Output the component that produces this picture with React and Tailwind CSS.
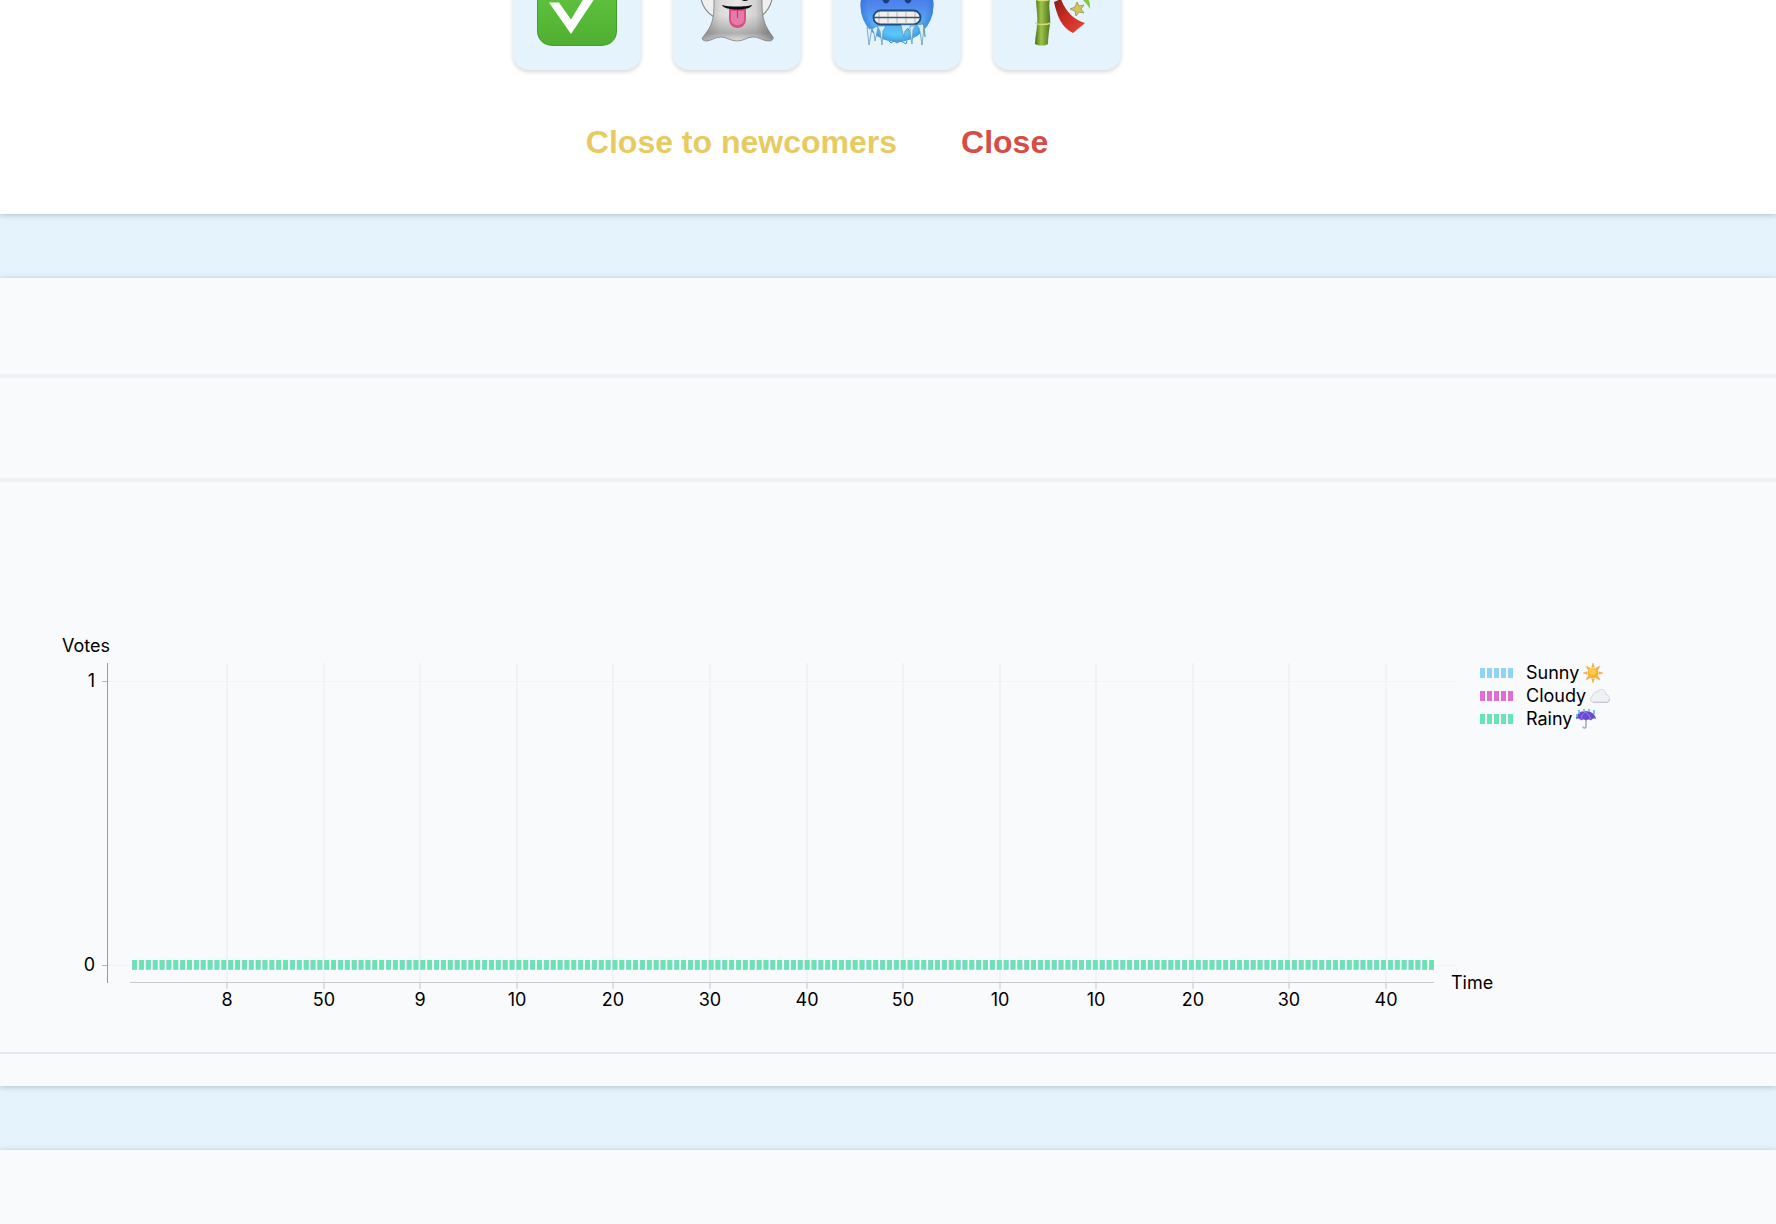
const SANS = '"Liberation Sans", Arial, sans-serif';

const xTicks = ["8", "50", "9", "10", "20", "30", "40", "50", "10", "10", "20", "30", "40"];

function CheckEmoji() {
  return (
    <svg viewBox="0 0 80 80" className="size-20" role="img" aria-label="Check mark">
      <defs>
        <linearGradient id="ck" x1="0" y1="0" x2="0" y2="1">
          <stop offset="0" stopColor="#6acb45" />
          <stop offset="0.6" stopColor="#58bb39" />
          <stop offset="1" stopColor="#50ae31" />
        </linearGradient>
      </defs>
      <rect width="80" height="80" rx="15" fill="#479c2e" />
      <rect x="1" y="0" width="78" height="79" rx="14" fill="url(#ck)" />
      <path d="M12 36.500h10l12 17L56 17h12L34 68z" fill="#fff" />
    </svg>
  );
}

function GhostEmoji() {
  return (
    <svg viewBox="0 0 80 80" className="size-20" role="img" aria-label="Ghost">
      <defs>
        <linearGradient id="gh" x1="0" y1="0" x2="1" y2="0">
          <stop offset="0" stopColor="#a2a2a2" />
          <stop offset="0.25" stopColor="#dadada" />
          <stop offset="0.5" stopColor="#e9e9e9" />
          <stop offset="0.75" stopColor="#d2d2d2" />
          <stop offset="1" stopColor="#828282" />
        </linearGradient>
        <linearGradient id="gs" x1="0" y1="0" x2="0" y2="1">
          <stop offset="0.6" stopColor="#777" stopOpacity="0" />
          <stop offset="0.88" stopColor="#6b6b6b" stopOpacity="0.45" />
          <stop offset="1" stopColor="#bbb" stopOpacity="0.3" />
        </linearGradient>
      </defs>
      <path d="M3 24c0 11 4 21 14 27l6-14h34l6 14c9-6 13-16 13-27z" fill="#efeff0" stroke="#8c8c8e" strokeWidth="1.200" />
      <path d="M15 10h50v26c0 18 3 24 11 35 1 3-2 4-5 4-7-1-9-4-15-4-6 0-9 4-16 4s-10-4-16-4-8 3-14 4c-4 0-6-2-4-4 9-11 11-17 11-35 0-3-2-6-2-26z" fill="url(#gh)" />
      <path d="M15 10h50v26c0 18 3 24 11 35 1 3-2 4-5 4-7-1-9-4-15-4-6 0-9 4-16 4s-10-4-16-4-8 3-14 4c-4 0-6-2-4-4 9-11 11-17 11-35 0-3-2-6-2-26z" fill="url(#gs)" stroke="#777" strokeWidth="0.700" />
      <ellipse cx="48" cy="31" rx="5" ry="4" fill="#111" />
      <path d="M32 42h17v11c0 12-17 12-17 0z" fill="#d94f83" />
      <path d="M34 45v8c0 8 13 8 13 0v-8z" fill="#e77aa9" />
      <path d="M40.500 43v9" stroke="#b83f70" strokeWidth="1.200" />
      <path d="M25 39c6 2 24 2 30 0-1 6-28 6-30 0z" fill="#0b0b0b" />
    </svg>
  );
}

function ColdEmoji() {
  return (
    <svg viewBox="0 0 80 80" className="size-20" role="img" aria-label="Cold face">
      <defs>
        <linearGradient id="cd" x1="0" y1="0" x2="0" y2="1">
          <stop offset="0" stopColor="#3c62e0" />
          <stop offset="0.5" stopColor="#4f86ee" />
          <stop offset="0.78" stopColor="#57b4f6" />
          <stop offset="1" stopColor="#5fd8f7" />
        </linearGradient>
        <radialGradient id="ce">
          <stop offset="0.8" stopColor="#2f72cf" stopOpacity="0" />
          <stop offset="1" stopColor="#2f72cf" stopOpacity="0.6" />
        </radialGradient>
      </defs>
      <circle cx="40" cy="39.500" r="36.500" fill="url(#cd)" />
      <circle cx="40" cy="39.500" r="36.500" fill="url(#ce)" />
      <ellipse cx="29" cy="31" rx="4" ry="6.500" fill="#173f7d" />
      <ellipse cx="51" cy="31" rx="4" ry="6.500" fill="#173f7d" />
      <rect x="16.500" y="44.500" width="47" height="14" rx="7" fill="#f0eeee" stroke="#1f4c80" strokeWidth="1.800" />
      <path d="M22 46v11M31 45.500v12M40 45.500v12M49 45.500v12M58 46v11" stroke="#b9b4b2" strokeWidth="1" />
      <path d="M17 51.500h46" stroke="#315679" strokeWidth="1.300" />
      <g fill="#d4effb" stroke="#568fba" strokeWidth="0.700">
        <path d="M10 61l3 2 2-1-1 6-2 11-1-9z" />
        <path d="M15 63l5-3 1 2-3 13-1-8z" />
        <path d="M20 60h9l-3 5-1 14-2-14z" />
        <path d="M44 59h15l-1 4-3-1-3 3-1-3-3 3-1 6-2-7z" />
        <path d="M53 60h5l-2 4-1 14-2-13z" />
        <path d="M60 59l6-1 1 3-2 18-2-13-1-4z" />
        <path d="M67 57l1 14-1-7z" />
      </g>
      <path d="M32 75l2 2 3-2 3 2 3-2 3 1 3 2 1-3" fill="none" stroke="#3c8fc4" />
    </svg>
  );
}

function TanabataEmoji() {
  return (
    <svg viewBox="0 0 80 80" className="size-20" role="img" aria-label="Tanabata tree">
      <defs>
        <linearGradient id="bm" x1="0" y1="0" x2="1" y2="0">
          <stop offset="0" stopColor="#4d6e1c" />
          <stop offset="0.4" stopColor="#9cc447" />
          <stop offset="1" stopColor="#527620" />
        </linearGradient>
        <linearGradient id="rb" x1="0" y1="0" x2="1" y2="1">
          <stop offset="0" stopColor="#861b16" />
          <stop offset="0.4" stopColor="#c42a22" />
          <stop offset="1" stopColor="#f04438" />
        </linearGradient>
      </defs>
      <path d="M19 10h13l1 23c-2 9 1 16 0 25-1 7-2 14-2 20-3 2-9 2-13 0 0-7 2-14 2-20 1-9-1-17-1-25z" fill="url(#bm)" />
      <path d="M18 57c3 2 12 2 16 0M18 33c4 2 11 2 16 0" stroke="#d5dc75" strokeWidth="1.500" fill="none" />
      <path d="M37 36l7-3c5 14 14 21 24 24L56 67C45 62 40 50 37 36z" fill="url(#rb)" />
      <path d="M60 36l2 4 5-1-3 4 3 4-5-1-3 4-1-5-5-2 5-2z" fill="#d1c35d" stroke="#98963f" strokeWidth="0.800" />
      <path d="M64 32l7 1c2 3 2 6 2 10-2-4-5-7-9-11z" fill="#81c63d" />
    </svg>
  );
}

function SunIcon() {
  return (
    <svg viewBox="0 0 20 20" className="size-5" role="img" aria-label="Sun">
      <path d="M10 0l1.300 4h-2.600zM10 20l1.300-4h-2.600zM0 10l4-1.300v2.600zM20 10l-4-1.300v2.600zM3 3l4 2-2 2zM17 3l-4 2 2 2zM3 17l4-2-2-2zM17 17l-4-2 2-2z" fill="#efa348" stroke="#f3b565" strokeWidth="0.600" />
      <circle cx="10" cy="10" r="5.500" fill="#f8b12e" />
      <circle cx="9.500" cy="8.500" r="3.500" fill="#fdcc4a" />
    </svg>
  );
}

function CloudIcon() {
  return (
    <svg viewBox="0 0 20 20" className="size-5" role="img" aria-label="Cloud">
      <path d="M4 16.500C-1 16-.5 10.500 3 10 2.500 6.500 5.500 5.500 7 6.500c2-5 9-3.500 9 2 5 .5 4.500 8 0 8z" fill="#eff1f5" stroke="#c9ced6" strokeWidth="0.800" />
      <path d="M3 16.200h13.500c2 0 3-1.500 3-3" fill="none" stroke="#bcc3ce" />
    </svg>
  );
}

function UmbrellaIcon() {
  return (
    <svg viewBox="0 0 20 20" className="size-5" role="img" aria-label="Umbrella with rain">
      <path d="M10 9v8.500c0 2-3 2-3 0" fill="none" stroke="#a5a8b3" strokeWidth="1.500" />
      <path d="M0 10c0-5 4-8 9.500-8S19.500 5 20 10c-2-1-3.500-.5-5 1.500-1.500-1.500-3.500-1.500-5 0-1.500-1.500-3.500-1.500-5 0-1.500-2-3-2.500-5-1.500z" fill="#6a4bd0" />
      <path d="M9.500 3c-3 2-4 4-4.500 7.500M9.500 3c3 2 4.500 4 5 7" fill="none" stroke="#9a83ec" />
      <path d="M3 1v4M8 0v3M13 0v3M18 1v4M1 5v3" stroke="#68bdea" strokeWidth="1.800" />
    </svg>
  );
}

const legend = [
  { label: "Sunny", color: "#8fd3f8", Icon: SunIcon },
  { label: "Cloudy", color: "#e36cd3", Icon: CloudIcon },
  { label: "Rainy", color: "#68e3b4", Icon: UmbrellaIcon },
];

const FIRST_TICK = 227;
const LAST_TICK = 1386;
const tickX = (i) => Math.round(FIRST_TICK + (i * (LAST_TICK - FIRST_TICK)) / (xTicks.length - 1));

const DASHES = 190;
const dashX = (i) => 132 + (i * 1297) / (DASHES - 1);

function VotesChart() {
  return (
    <svg width="1448" height="400" viewBox="50 630 1448 400" className="shrink-0" role="img" aria-label="Votes over time" fontFamily="Inter, sans-serif" fontSize="18">
      <g stroke="#f2f3f5">
        <path d="M108 681.500H1457M108 965.500H1457" />
        {xTicks.map((_, i) => (
          <path key={i} d={`M${tickX(i)} 663V983`} strokeWidth="2" />
        ))}
      </g>
      <path d="M107.500 663V983" stroke="#96999e" />
      <path d="M102 681.500h5M102 965.500h5" stroke="#b4b6ba" />
      <path d="M130 982.500H1434" stroke="#c8cbce" />
      {xTicks.map((_, i) => (
        <path key={i} d={`M${tickX(i)} 983v6`} stroke="#dddfe0" strokeWidth="2" />
      ))}
      {Array.from({ length: DASHES }, (_, i) => (
        <g key={i}>
          <rect x={dashX(i)} y="960" width="5" height="10" fill="#a9cbdc" />
          <rect x={dashX(i) + 0.5} y="960" width="4.500" height="9" fill="#68e3b4" />
        </g>
      ))}
      <text x="62" y="652">Votes</text>
      <text x="95" y="687" textAnchor="end">1</text>
      <text x="95" y="971" textAnchor="end">0</text>
      {xTicks.map((t, i) => (
        <text key={i} x={tickX(i)} y="1006" textAnchor="middle">{t}</text>
      ))}
      <text x="1451" y="989">Time</text>
    </svg>
  );
}

function Tile({ children }) {
  return (
    <div className="flex size-32 items-center justify-center rounded-2xl bg-[#e5f3fd] shadow-[0_2px_4px_rgba(0,0,0,0.16)]">
      {children}
    </div>
  );
}

export default function App() {
  return (
    <main className="h-screen overflow-hidden bg-[#e5f3fd] text-black" style={{ fontFamily: SANS }}>
      <section className="relative bg-white pr-[142px] pb-13 shadow-[0_1px_6px_rgba(0,0,0,0.22)]">
        <div className="-mt-[58px] flex justify-center gap-8">
          <Tile><CheckEmoji /></Tile>
          <Tile><GhostEmoji /></Tile>
          <Tile><ColdEmoji /></Tile>
          <Tile><TanabataEmoji /></Tile>
        </div>
        <div className="mt-13 flex justify-center gap-16 text-[32px] leading-10 font-bold">
          <button type="button" className="text-[#e7cb62]">Close to newcomers</button>
          <button type="button" className="text-[#d64c46]">Close</button>
        </div>
      </section>

      <section className="mt-16 bg-[#f9fafc] pb-8 shadow-[0_1px_6px_rgba(0,0,0,0.22)]">
        <div className="h-24" />
        <div className="h-[104px] border-t-4 border-[#f0f0f7]" />
        <div className="border-t-4 border-[#edf2f6]">
          <div className="flex border-b-2 border-[#e2e8ef] pt-[148px] pb-[22px] pl-[50px]">
            <VotesChart />
            <ul className="-ml-[18px] pt-[31px] text-[18px] leading-[23px]" style={{ fontFamily: "Inter, sans-serif" }}>
              {legend.map(({ label, color, Icon }) => (
                <li key={label} className="flex items-center">
                  <svg width="46" height="10" aria-hidden="true">
                    {[0, 1, 2, 3, 4].map((i) => (
                      <rect key={i} x={i * 7} width="5" height="10" fill={color} />
                    ))}
                  </svg>
                  <span className="mr-1">{label}</span>
                  <Icon />
                </li>
              ))}
            </ul>
          </div>
        </div>
      </section>

      <section className="mt-16 h-24 bg-[#f9fafc] shadow-[0_1px_6px_rgba(0,0,0,0.22)]" />
    </main>
  );
}
